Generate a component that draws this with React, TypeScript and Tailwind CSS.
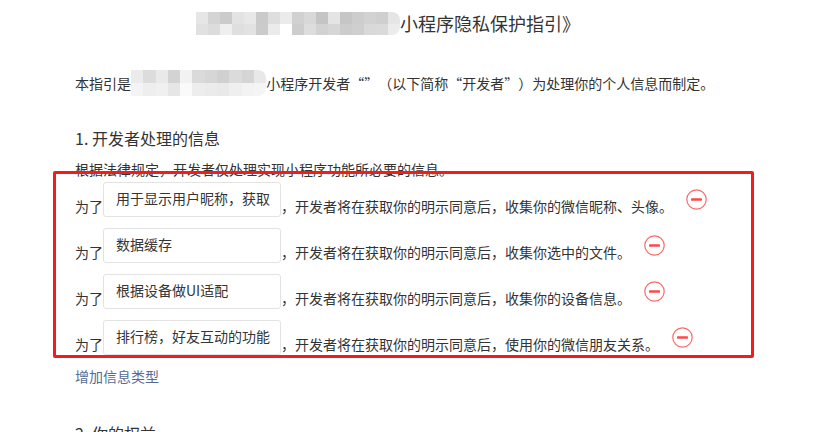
import React from "react";

const FONT = {
  fontFamily: '"Noto Sans CJK SC", "Microsoft YaHei", "Liberation Sans", sans-serif',
};

const titleGrays = [
  "#e6e6e6", "#d4d4d4", "#cbcbcb", "#e3e3e3", "#e8e8e8", "#cacaca", "#dedede", "#ebebeb", "#d1d1d1",
  "#d8d8d8", "#c4c4c4", "#e4e4e4", "#c6c6c6", "#cdcdcd", "#d2d2d2", "#cfcfcf", "#e5e5e5",
  "#e1e1e1", "#dcdcdc", "#efefef", "#dfdfdf", "#e2e2e2", "#cbcbcb", "#ebebeb", "#ffffff", "#cdcdcd",
  "#dddddd", "#d2d2d2", "#d6d6d6", "#cccccc", "#cfcfcf", "#d9d9d9", "#dadada", "#ececec",
];

const paraGrays = [
  "#ebebeb", "#dcdcdc", "#e9e9e9", "#d3d3d3", "#f2f2f2", "#dadada", "#d6d6d6", "#d0d0d0", "#dbdbdb", "#d5d5d5", "#e8e8e8",
  "#f4f4f4", "#eeeeee", "#f0f0f0", "#e6e6e6", "#fafafa", "#ededed", "#ebebeb", "#e9e9e9", "#efefef", "#f3f3f3", "#f5f5f5",
];

function Mosaic({ cols, rows, cell, h, grays, rounded }: { cols: number; rows: number; cell: number; h: number; grays: string[]; rounded?: boolean }) {
  return (
    <div
      className={"grid overflow-hidden " + (rounded ? "rounded-r-lg" : "")}
      style={{ gridTemplateColumns: `repeat(${cols}, ${cell}px)`, gridTemplateRows: `repeat(${rows}, ${h}px)` }}
    >
      {Array.from({ length: cols * rows }).map((_, i) => (
        <div key={i} style={{ background: grays[i % grays.length] }} />
      ))}
    </div>
  );
}

function MinusIcon() {
  return (
    <svg width="21" height="21" viewBox="0 0 21 21" className="shrink-0">
      <circle cx="10.5" cy="10.5" r="9.7" fill="none" stroke="#f86a6a" strokeWidth="1.2" />
      <rect x="5" y="9.3" width="11" height="2.4" rx="0.6" fill="#fa4b4b" />
    </svg>
  );
}

function LQ() {
  return <span className="inline-block w-[14px] text-right">“</span>;
}
function RQ() {
  return <span className="inline-block w-[14px] text-left">”</span>;
}

const rows = [
  { input: "用于显示用户昵称，获取", text: "，开发者将在获取你的明示同意后，收集你的微信昵称、头像。" },
  { input: "数据缓存", text: "，开发者将在获取你的明示同意后，收集你选中的文件。" },
  { input: "根据设备做UI适配", text: "，开发者将在获取你的明示同意后，收集你的设备信息。" },
  { input: "排行榜，好友互动的功能", text: "，开发者将在获取你的明示同意后，使用你的微信朋友关系。" },
];

export default function App() {
  return (
    <div className="relative h-[432px] w-[837px] overflow-hidden bg-white text-[#333]" style={FONT}>
      <div className="w-[776px] pl-[75px]">
        <div className="-ml-[75px] mt-[12px] flex h-[23px] w-[776px] items-center justify-center">
          <Mosaic cols={17} rows={2} cell={12} h={11.5} grays={titleGrays} rounded />
          <span className="whitespace-nowrap text-[18px] leading-[23px]">小程序隐私保护指引》</span>
        </div>

        <div className="mt-[35px] flex h-[26px] items-center whitespace-nowrap text-[14px]">
          <span>本指引是</span>
          <Mosaic cols={11} rows={2} cell={12.3} h={13} grays={paraGrays} rounded />
          <span>
            小程序开发者<LQ />
            <RQ />（以下简称<LQ />开发者<RQ />）为处理你的个人信息而制定。
          </span>
        </div>

        <div className="mt-[30px] h-[24px] text-[16px] leading-[24px]">1. 开发者处理的信息</div>
        <div className="mt-[8px] h-[22px] whitespace-nowrap text-[14px] leading-[22px]">
          根据法律规定，开发者仅处理实现小程序功能所必要的信息。
        </div>

        <div className="mt-[2px] flex flex-col gap-[11px]">
          {rows.map((r) => (
            <div key={r.input} className="flex items-center whitespace-nowrap text-[14px]">
              <span className="self-end leading-[22px]">为了</span>
              <div className="flex h-[35px] w-[178px] shrink-0 items-center overflow-hidden rounded-[3px] border border-[#e3e3e3] pl-[12px] pb-[2px] text-[#353535]">
                {r.input}
              </div>
              <span className="self-end leading-[22px]">{r.text}</span>
              <div className="ml-[13px]">
                <MinusIcon />
              </div>
            </div>
          ))}
        </div>

        <div className="mt-[10px] h-[22px] text-[14px] leading-[22px] text-[#576b95]">增加信息类型</div>
        <div className="mt-[34px] h-[24px] text-[16px] leading-[24px]">2. 你的权益</div>
      </div>

      <div className="absolute left-[53px] top-[171px] h-[187px] w-[701px] rounded-[2px] border-[3px] border-[#f61a1a]" />
    </div>
  );
}
